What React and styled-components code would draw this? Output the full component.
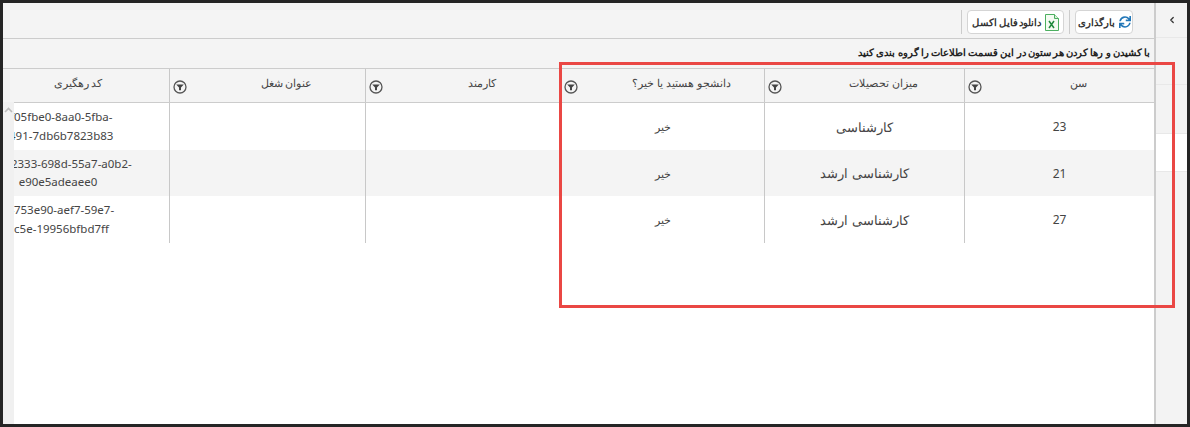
import React from 'react'
import styled, { createGlobalStyle } from 'styled-components'
import { ChevronLeft } from 'lucide-react'
import { FaSync } from 'react-icons/fa'

const Global = createGlobalStyle`
  html, body {
    margin: 0;
    padding: 0;
    background: #222;
  }
  * {
    box-sizing: border-box;
  }
`
const Frame = styled.div`
  position: relative;
  width: 1190px;
  height: 427px;
  padding: 3px;
  background: #252525;
  overflow: hidden;
  font-family: 'Noto Sans', 'Liberation Sans', sans-serif;
  color: #333;
`
const Page = styled.div`
  display: flex;
  height: 100%;
  background: #fff;
`
const Main = styled.div`
  flex: 1;
  min-width: 0;
  display: flex;
  flex-direction: column;
`
const Side = styled.div`
  width: 33px;
  background: #f3f3f3;
  border-left: 2px solid #ccc;
  display: flex;
  flex-direction: column;
`
const SideItem = styled.div`
  height: ${(p) => p.$h}px;
  background: ${(p) => (p.$white ? '#fff' : 'transparent')};
  border-bottom: 1px solid #e8e8e8;
  display: flex;
  align-items: center;
  justify-content: center;
  color: #333;
`
const Toolbar = styled.div`
  height: 36px;
  flex: none;
  background: #f4f4f4;
  border-bottom: 1px solid #ccc;
  display: flex;
  direction: rtl;
  align-items: center;
  gap: 5px;
  padding: 3px 21px 0 0;
`
const Button = styled.div`
  width: ${(p) => p.$w}px;
  height: 24px;
  display: flex;
  align-items: center;
  justify-content: center;
  gap: 4px;
  background: #fff;
  border: 1px solid #d5d5d5;
  border-radius: 4px;
  font-size: 9.5px;
  word-spacing: -1px;
  font-weight: 700;
  color: #333;
`
const Sep = styled.span`
  width: 1px;
  height: 24px;
  background: #ccc;
`
const Hint = styled.div`
  height: 29px;
  flex: none;
  background: #f4f4f4;
  direction: rtl;
  padding: 6px 4px 0 0;
  font-size: 10px;
  word-spacing: -0.4px;
  line-height: 15px;
  font-weight: 700;
  color: #222;
`
const TableWrap = styled.div`
  flex: 1;
  min-height: 0;
  display: flex;
  flex-direction: column;
`
const Row = styled.div`
  display: grid;
  grid-template-columns: 167px 196px 195px 204px 200px 189px;
  height: ${(p) => p.$h}px;
  flex: none;
  background: ${(p) => (p.$alt ? '#f4f4f4' : '#fff')};
`
const HeadRow = styled(Row)`
  background: #f4f4f4;
  border-top: 1px solid #ccc;
  border-bottom: 1px solid #ccc;
`
const HeadCell = styled.div`
  position: relative;
  border-right: ${(p) => (p.$last ? 'none' : '1px solid #c8c8c8')};
  padding: 6px ${(p) => (p.$code ? 16 : 0)}px 0 ${(p) => (p.$code ? 0 : 38)}px;
  text-align: center;
  direction: rtl;
  font-size: 10.5px;
  line-height: 16px;
  color: #444;
`
const FilterBtn = styled.span`
  position: absolute;
  left: 3px;
  top: 11px;
  display: flex;
`
const Cell = styled.div`
  border-right: ${(p) => (p.$last ? 'none' : '1px solid #c8c8c8')};
  display: flex;
  align-items: center;
  justify-content: center;
  direction: rtl;
  font-size: ${(p) => p.$size || 11}px;
  color: #444;
`
const CodeCell = styled.div`
  border-right: 1px solid #c8c8c8;
  overflow: hidden;
  display: flex;
  align-items: center;
`
const CodeText = styled.div`
  flex: none;
  width: 222px;
  margin-left: -56px;
  text-align: center;
  font-size: 11.5px;
  line-height: 18.5px;
  color: #444;
  white-space: nowrap;
`
const CodeLine = styled.div``
const Rail = styled.div`
  position: absolute;
  left: 3px;
  top: 102px;
  bottom: 3px;
  width: 11px;
  background: #f0f0f0;
  display: flex;
  justify-content: center;
  padding-top: 5px;
`
const Marker = styled.div`
  position: absolute;
  left: 559px;
  top: 62px;
  width: 616px;
  height: 246px;
  border: 3px solid #ea4744;
  pointer-events: none;
`

const columns = ['کد رهگیری', 'عنوان شغل', 'کارمند', 'دانشجو هستید یا خیر؟', 'میزان تحصیلات', 'سن']

const rows = [
  { h: 47, code: ['8f05fbe0-8aa0-5fba-', 'a491-7db6b7823b83'], edu: 'کارشناسی', age: 23 },
  { h: 46, alt: true, code: ['d1a42333-698d-55a7-a0b2-', 'e90e5adeaee0'], edu: 'کارشناسی ارشد', age: 21 },
  { h: 47, code: ['c4753e90-aef7-59e7-', 'bc5e-19956bfbd7ff'], edu: 'کارشناسی ارشد', age: 27 },
]

function FilterIcon() {
  return (
    <svg width='14' height='14' viewBox='0 0 14 14'>
      <circle cx='7' cy='7' r='6' fill='none' stroke='#555' strokeWidth='1.3' />
      <path d='M3.2 4.4h7.6L8 7.4v2.8H6V7.4z' fill='#444' />
    </svg>
  )
}

function ExcelIcon() {
  return (
    <svg width='14' height='17' viewBox='0 0 14 17'>
      <path d='M.5.5h9l4 4v12H.5z' fill='#f4fbf2' stroke='#4caf60' />
      <path d='M9.5.5v4h4' fill='#d8efd8' stroke='#4caf60' />
      <path d='M4 7l5 7M9 7l-5 7' stroke='#1f8a3c' strokeWidth='1.5' fill='none' />
    </svg>
  )
}

function App() {
  return (
    <Frame>
      <Global />
      <Page>
        <Main>
          <Toolbar>
            <Button $w={58}>
              <FaSync size={12} color='#2277b8' />
              بارگذاری
            </Button>
            <Sep />
            <Button $w={97}>
              <ExcelIcon />
              دانلود فایل اکسل
            </Button>
            <Sep />
          </Toolbar>
          <Hint>با کشیدن و رها کردن هر ستون در این قسمت اطلاعات را گروه بندی کنید</Hint>
          <TableWrap>
            <HeadRow $h={35}>
              {columns.map((c, i) => (
                <HeadCell key={c} $code={i === 0} $last={i === 5}>
                  {c}
                  {i > 0 && (
                    <FilterBtn>
                      <FilterIcon />
                    </FilterBtn>
                  )}
                </HeadCell>
              ))}
            </HeadRow>
            {rows.map((r) => (
              <Row key={r.age} $h={r.h} $alt={r.alt}>
                <CodeCell>
                  <CodeText>
                    {r.code.map((l) => (
                      <CodeLine key={l}>{l}</CodeLine>
                    ))}
                  </CodeText>
                </CodeCell>
                <Cell />
                <Cell />
                <Cell $size={11}>خیر</Cell>
                <Cell $size={13}>{r.edu}</Cell>
                <Cell $size={12} $last>
                  {r.age}
                </Cell>
              </Row>
            ))}
          </TableWrap>
        </Main>
        <Side>
          <SideItem $h={35}>
            <ChevronLeft size={10} strokeWidth={3} />
          </SideItem>
          <SideItem $h={47} />
          <SideItem $h={49} />
          <SideItem $h={38} $white />
        </Side>
      </Page>
      <Rail>
        <svg width='9' height='6' viewBox='0 0 9 6' fill='none' stroke='#bbb' strokeWidth='1.6'>
          <path d='M1 5l3.5-3.5L8 5' />
        </svg>
      </Rail>
      <Marker />
    </Frame>
  )
}

export default App
